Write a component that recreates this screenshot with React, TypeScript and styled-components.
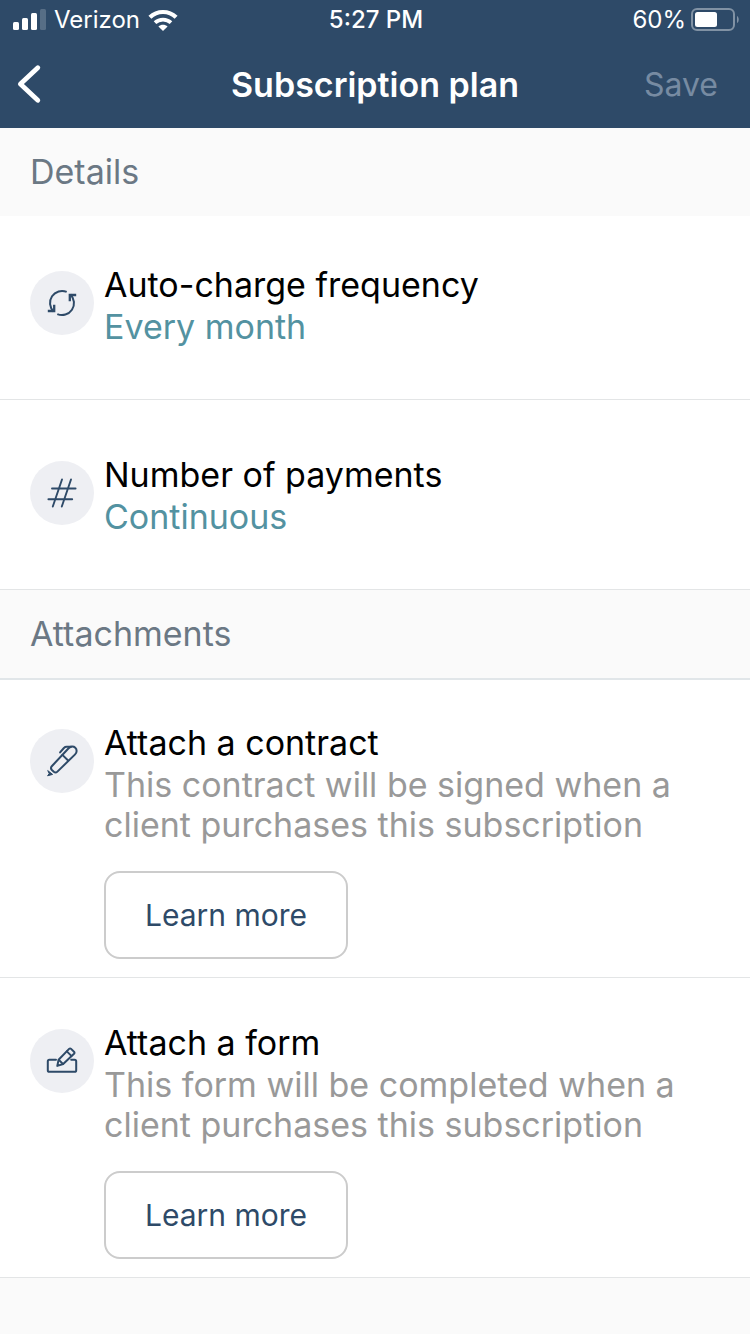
import React from "react";
import styled, { createGlobalStyle } from "styled-components";

const navy = "#2e4a68";
const teal = "#5392a1";
const line = "#e3e5e6";

const GlobalStyle = createGlobalStyle`
  *, *::before, *::after { box-sizing: border-box; }
  body {
    margin: 0;
    background: #fafafa;
    color: #000;
    font-family: Inter, "Liberation Sans", sans-serif;
    font-size: 34px;
  }
  h1, h2, h3, p { margin: 0; font: inherit; }
  button { font: inherit; cursor: pointer; }
`;

const Header = styled.header`
  background: ${navy};
  color: #fff;
`;

const StatusBar = styled.div`
  display: grid;
  grid-template-columns: 1fr auto 1fr;
  align-items: center;
  height: 40px;
  padding: 0 11px 0 13px;
  font-size: 24px;
  line-height: 40px;
`;

const StatusGroup = styled.div<{ $end?: boolean }>`
  display: flex;
  align-items: center;
  justify-content: ${(p) => (p.$end ? "flex-end" : "flex-start")};
  gap: ${(p) => (p.$end ? "5px" : "8px")};

  svg { display: block; flex: none; }
`;

const Clock = styled.time`
  font-weight: 500;
`;

const NavBar = styled.nav`
  display: grid;
  grid-template-columns: 1fr auto 1fr;
  align-items: center;
  height: 88px;
  padding: 0 16px;
`;

const NavButton = styled.button<{ $end?: boolean }>`
  justify-self: ${(p) => (p.$end ? "end" : "start")};
  padding: ${(p) => (p.$end ? "0 16px" : "0")};
  border: 0;
  background: none;
  color: #fff;

  &:disabled { color: #778ba2; cursor: default; }
  && { font-size: ${(p) => (p.$end ? "32px" : "34px")}; }
  svg { display: block; }
`;

const Title = styled.h1`
  && { font-weight: 600; }
`;

const SectionTitle = styled.h2<{ $ruled?: boolean }>`
  padding: 0 30px;
  background: #fafafa;
  border-bottom: ${(p) => (p.$ruled ? "2px solid #e1e6e9" : "0")};
  color: #6b7884;
  && { line-height: 88px; }
`;

const Row = styled.section<{ $top: number; $bottom: number }>`
  display: flex;
  align-items: flex-start;
  gap: 10px;
  padding: ${(p) => `${p.$top}px 30px ${p.$bottom}px`};
  border-bottom: 1px solid ${line};
  background: #fff;
`;

const IconDisc = styled.div`
  display: grid;
  flex: none;
  place-items: center;
  width: 64px;
  height: 64px;
  margin-top: 7px;
  border-radius: 50%;
  background: #eeeff3;

  svg { display: block; }
`;

const RowBody = styled.div`
  flex: 1;
  min-width: 0;
`;

const RowTitle = styled.h3`
  && { line-height: 42px; }
`;

const RowValue = styled.p`
  color: ${teal};
  && { line-height: 42px; }
`;

const RowText = styled.p`
  max-width: 600px;
  margin-top: 1px;
  color: #999;
  && { line-height: 40px; }
`;

const OutlineButton = styled.button`
  width: 244px;
  height: 88px;
  margin-top: 26px;
  border: 2px solid #ccc;
  border-radius: 16px;
  background: #fff;
  color: ${navy};
  && { font-size: 30px; }
`;

const SignalIcon = () => (
  <svg width="33" height="22" viewBox="0 0 33 22" fill="#fff" aria-hidden="true">
    <rect x="0" y="13" width="6" height="8" rx="1.5" />
    <rect x="9" y="9" width="6" height="12" rx="1.5" />
    <rect x="18" y="4" width="6" height="17" rx="1.5" />
    <rect x="27" y="0" width="6" height="21" rx="1.5" opacity="0.2" />
  </svg>
);

const WifiIcon = () => (
  <svg width="30" height="22" viewBox="0 0 30 22" fill="none" aria-hidden="true">
    <path d="M1.9 8.3C9.2 1.2 20.8 1.2 28.1 8.3" stroke="#fff" strokeWidth="4.2" />
    <path d="M7 13.6C11.5 9.5 18.5 9.5 23 13.6" stroke="#fff" strokeWidth="3.8" />
    <path d="M15 22l-4.6-4.6c2.6-2.2 6.6-2.2 9.2 0z" fill="#fff" />
  </svg>
);

const BatteryIcon = () => (
  <svg width="48" height="24" viewBox="0 0 48 24" fill="none" aria-hidden="true">
    <rect x="1" y="1" width="42" height="21" rx="5" stroke="#8192a4" strokeWidth="2" />
    <rect x="4" y="4" width="22" height="15" rx="2.5" fill="#fff" />
    <path d="M46 8c2.3 1 2.3 6 0 7z" fill="#8192a4" />
  </svg>
);

const BackIcon = () => (
  <svg width="26" height="40" viewBox="0 0 26 40" fill="none" aria-hidden="true">
    <path d="M21.8 3.7L4.4 20l17.4 16.3" stroke="#fff" strokeWidth="4.8" strokeLinecap="round" strokeLinejoin="round" />
  </svg>
);

const RepeatIcon = () => (
  <svg width="32" height="32" viewBox="0 0 32 32" fill="none" stroke={navy} strokeWidth="2" aria-hidden="true">
    <path d="M7.6 24.5A12 12 0 0 1 20.7 4.9" />
    <path d="M24.4 7.5A12 12 0 0 1 11.3 27.1" />
    <path d="M1.8 24h6.4v-6.2M30.2 8h-6.4v6.2" strokeWidth="2.3" />
  </svg>
);

const HashIcon = () => (
  <svg width="32" height="32" viewBox="0 0 32 32" fill="none" stroke={navy} strokeWidth="1.9" strokeLinecap="round" aria-hidden="true">
    <path d="M6 11.5h23.6M2.4 22.3h23.8M16 2.5L6.8 29.5M25 2.5l-9.2 27" />
  </svg>
);

const PenIcon = () => (
  <svg width="32" height="32" viewBox="0 0 32 32" fill="none" stroke={navy} strokeWidth="2" strokeLinecap="round" strokeLinejoin="round" aria-hidden="true">
    <path d="M5.8 21.2L22.6 3.2c1.9-2 4.9-2.1 6.7-.4s1.8 4.6-.2 6.6L11.4 26.6c-1 1-2.6 1.1-3.6.2L5.9 25c-1-1-1-2.7-.1-3.8z" />
    <path d="M16.4 9.9l5.7 5.6M25 1.8h-4.4c-1.2 0-1.9.4-2.7 1.2l-3.8 4.4" />
    <path d="M2 25.8l4.6 3.6-5 1.4 1.4-2z" fill={navy} strokeWidth="1" />
  </svg>
);

const FormIcon = () => (
  <svg width="32" height="32" viewBox="0 0 32 32" fill="none" stroke={navy} strokeWidth="2" strokeLinecap="round" strokeLinejoin="round" aria-hidden="true">
    <path d="M10 14.8H3.4q-1.6 0-1.6 1.6v8.8q0 1.6 1.6 1.6h25.2q1.6 0 1.6-1.6v-8.8q0-1.6-1.6-1.6h-3.4" />
    <path d="M11.3 20.9l1.3-6.1L23.1 3.9q1-1 2 0l2.9 2.8q1 1 0 2L17.2 19z" />
    <path d="M12.9 15l4 3.9M20.8 6.4l4.6 4.5" />
  </svg>
);

export default function App() {
  return (
    <>
      <GlobalStyle />
      <Header>
        <StatusBar>
          <StatusGroup>
            <SignalIcon />
            <span>Verizon</span>
            <WifiIcon />
          </StatusGroup>
          <Clock>5:27 PM</Clock>
          <StatusGroup $end>
            <span>60%</span>
            <BatteryIcon />
          </StatusGroup>
        </StatusBar>
        <NavBar>
          <NavButton type="button" aria-label="Back">
            <BackIcon />
          </NavButton>
          <Title>Subscription plan</Title>
          <NavButton type="button" $end disabled>
            Save
          </NavButton>
        </NavBar>
      </Header>
      <main>
        <SectionTitle>Details</SectionTitle>
        <Row $top={48} $bottom={51}>
          <IconDisc><RepeatIcon /></IconDisc>
          <RowBody>
            <RowTitle>Auto-charge frequency</RowTitle>
            <RowValue>Every month</RowValue>
          </RowBody>
        </Row>
        <Row $top={54} $bottom={51}>
          <IconDisc><HashIcon /></IconDisc>
          <RowBody>
            <RowTitle>Number of payments</RowTitle>
            <RowValue>Continuous</RowValue>
          </RowBody>
        </Row>
        <SectionTitle $ruled>Attachments</SectionTitle>
        <Row $top={42} $bottom={18}>
          <IconDisc><PenIcon /></IconDisc>
          <RowBody>
            <RowTitle>Attach a contract</RowTitle>
            <RowText>This contract will be signed when a client purchases this subscription</RowText>
            <OutlineButton type="button">Learn more</OutlineButton>
          </RowBody>
        </Row>
        <Row $top={44} $bottom={18}>
          <IconDisc><FormIcon /></IconDisc>
          <RowBody>
            <RowTitle>Attach a form</RowTitle>
            <RowText>This form will be completed when a client purchases this subscription</RowText>
            <OutlineButton type="button">Learn more</OutlineButton>
          </RowBody>
        </Row>
      </main>
    </>
  );
}
